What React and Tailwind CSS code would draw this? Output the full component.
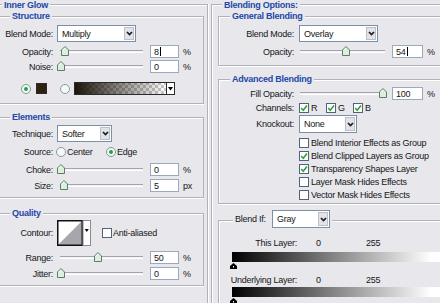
const LINE = "border-[#b1b1ba]";

function Legend({ children, className = "" }) {
  return (
    <div
      className={`h-[10px] w-fit bg-[#e7e7ec] px-[2px] font-bold leading-[10px] text-[#2447a6] ${className}`}
    >
      {children}
    </div>
  );
}

function Chevron() {
  return (
    <svg width="7" height="5" viewBox="0 0 7 5">
      <path d="M1 1 L3.5 3.6 L6 1" fill="none" stroke="#1d1d1d" strokeWidth="1.7" />
    </svg>
  );
}

function Select({ value, className = "" }) {
  return (
    <div className={`flex border border-[#7d8fa6] bg-white ${className}`}>
      <span className="flex flex-1 items-center pl-[4px]">{value}</span>
      <span className="m-px flex w-[10px] items-center justify-center border border-[#b9c0cc] bg-[#e2e3e9]">
        <Chevron />
      </span>
    </div>
  );
}

function Input({ value, caret, className = "" }) {
  return (
    <div className={`flex h-[13px] items-center border border-[#9aa9bd] bg-white pl-[3px] ${className}`}>
      {value}
      {caret && <span className="ml-px h-[9px] w-px bg-black" />}
    </div>
  );
}

function Thumb({ left }) {
  return (
    <svg
      width="8"
      height="10"
      viewBox="0 0 8 10"
      className="absolute top-[1px]"
      style={{ left }}
    >
      <path d="M4 0.5 L7.5 4 L7.5 9.5 L0.5 9.5 L0.5 4 Z" fill="#dcefdc" stroke="#5b7f66" />
      <path d="M1.5 4.5 L4 2" stroke="#fff" />
    </svg>
  );
}

function Slider({ pos, className = "" }) {
  return (
    <div className={`relative h-[13px] ${className}`}>
      <div className="absolute left-0 right-0 top-[5px] h-[3px] border-t border-b border-t-[#a4a4ad] border-b-white bg-[#f2f2f4]" />
      <Thumb left={pos} />
    </div>
  );
}

function SliderRow({ label, pos, value, unit, caret, className = "", right }) {
  return (
    <div className={`flex h-[13px] items-center ${className}`}>
      <span className={right ? "w-[75px] text-right" : "w-[53px] text-right"}>{label}</span>
      <Slider pos={pos} className={right ? "ml-[6px] w-[85px]" : "ml-[7px] w-[83px]"} />
      <Input value={value} caret={caret} className={right ? "ml-[7px] w-[31px]" : "ml-[7px] w-[29px]"} />
      <span className="ml-[4px]">{unit}</span>
    </div>
  );
}

function Radio({ on }) {
  return (
    <svg width="10" height="10" viewBox="0 0 10 10" className="shrink-0">
      <circle cx="5" cy="5" r="4.5" fill="#f7f9f7" stroke={on ? "#6f9f8a" : "#8797ab"} />
      {on && <circle cx="5" cy="5" r="2" fill="#2f9a52" />}
    </svg>
  );
}

function Box({ on }) {
  return (
    <svg width="10" height="10" viewBox="0 0 10 10" className="shrink-0">
      <rect x="0.5" y="0.5" width="9" height="9" fill="#fff" stroke="#52627a" />
      {on && <path d="M2.2 5 L4.2 7.2 L8 2.6" fill="none" stroke="#2ea13a" strokeWidth="1.6" />}
    </svg>
  );
}

function Check({ on, label }) {
  return (
    <div className="ml-[80px] flex h-[13px] items-center">
      <Box on={on} />
      <span className="ml-[2px]">{label}</span>
    </div>
  );
}

function GradientSwatch() {
  return (
    <svg width="101" height="13" viewBox="0 0 101 13" className="ml-[4px]">
      <defs>
        <pattern id="chk" width="6" height="6" patternUnits="userSpaceOnUse">
          <rect width="6" height="6" fill="#fff" />
          <rect width="3" height="3" fill="#c9c9c9" />
          <rect x="3" y="3" width="3" height="3" fill="#c9c9c9" />
        </pattern>
        <linearGradient id="fade" x1="0" x2="1" y1="0" y2="0">
          <stop offset="0" stopColor="#1c140a" stopOpacity="1" />
          <stop offset="1" stopColor="#1c140a" stopOpacity="0" />
        </linearGradient>
      </defs>
      <rect x="1" y="1" width="91" height="11" fill="url(#chk)" />
      <rect x="1" y="1" width="91" height="11" fill="url(#fade)" />
      <rect x="92" y="1" width="8" height="11" fill="#fff" />
      <rect x="0.5" y="0.5" width="100" height="12" fill="none" stroke="#2a2a2a" />
      <line x1="92.5" y1="1" x2="92.5" y2="12" stroke="#2a2a2a" />
      <path d="M94 5 H99 L96.5 8.5 Z" fill="#000" />
    </svg>
  );
}

function ContourPreview() {
  return (
    <svg width="34" height="26" viewBox="0 0 34 26" className="ml-[4px]">
      <path d="M1 1 H25 L1 25 Z" fill="#fff" />
      <path d="M25 1 V25 H1 Z" fill="#a7a7ab" />
      <rect x="0.75" y="0.75" width="24.5" height="24.5" fill="none" stroke="#111" strokeWidth="1.5" />
      <rect x="26" y="0.5" width="7.5" height="25" fill="#fff" stroke="#8a8a93" />
      <path d="M27.8 9 H31.8 L29.8 12 Z" fill="#000" />
    </svg>
  );
}

function BlendBar() {
  return (
    <div className="ml-[13px] h-[10px] bg-[linear-gradient(to_right,#000_0%,#7a7a7a_45%,#fff_96%)]" />
  );
}

function BarThumb() {
  return (
    <svg width="7" height="6" viewBox="0 0 7 6" className="ml-[11px] mt-[1px]">
      <path d="M3.5 0 L7 3 V6 H0 V3 Z" fill="#000" />
      <rect x="3" y="3" width="1" height="1.5" fill="#fff" />
    </svg>
  );
}

export default function App() {
  return (
    <div className="flex h-[303px] w-[440px] overflow-hidden bg-[#e7e7ec] font-['Liberation_Sans',Arial,sans-serif] text-[9px] leading-[10px] tracking-[-0.25px] text-[#161616]">
      {/* Inner Glow */}
      <div className="flex w-[208px] shrink-0 flex-col pt-[4px]">
        <div className={`flex-1 border-t border-r ${LINE} shadow-[inset_0_1px_0_#fff,1px_0_0_#fff]`}>
          <Legend className="-mt-[5px] ml-[2px]">Inner Glow</Legend>

          <div className={`mr-[3px] mt-[6px] border-t border-r border-b ${LINE} pb-[8px] shadow-[inset_0_1px_0_#fff,0_1px_0_#fff]`}>
            <Legend className="-mt-[6px] ml-[10px]">Structure</Legend>
            <div className="mt-[4px] flex h-[17px] items-center">
              <span className="w-[53px] text-right">Blend Mode:</span>
              <Select value="Multiply" className="ml-[4px] h-[17px] w-[79px]" />
            </div>
            <SliderRow className="mt-[3px]" label="Opacity:" pos={1} value="8" caret unit="%" />
            <SliderRow className="mt-[2px]" label="Noise:" pos={-3} value="0" unit="%" />
            <div className="mt-[9px] flex h-[13px] items-center">
              <span className="ml-[21px]">
                <Radio on />
              </span>
              <span className="ml-[5px] h-[11px] w-[11px] border border-[#2a2a2a] bg-[#30220f]" />
              <span className="ml-[13px]">
                <Radio />
              </span>
              <GradientSwatch />
            </div>
          </div>

          <div className={`mr-[3px] mt-[13px] border-t border-r border-b ${LINE} pb-[5px] shadow-[inset_0_1px_0_#fff,0_1px_0_#fff]`}>
            <Legend className="-mt-[6px] ml-[10px]">Elements</Legend>
            <div className="mt-[3px] flex h-[17px] items-center">
              <span className="w-[53px] text-right">Technique:</span>
              <Select value="Softer" className="ml-[4px] h-[17px] w-[55px]" />
            </div>
            <div className="mt-[4px] flex h-[12px] items-center">
              <span className="w-[53px] text-right">Source:</span>
              <span className="ml-[3px] flex w-[50px] items-center">
                <Radio />
                <span className="ml-[1px]">Center</span>
              </span>
              <span className="flex items-center">
                <Radio on />
                <span className="ml-[1px]">Edge</span>
              </span>
            </div>
            <SliderRow className="mt-[5px]" label="Choke:" pos={-3} value="0" unit="%" />
            <SliderRow className="mt-[3px]" label="Size:" pos={0} value="5" unit="px" />
          </div>

          <div className={`mr-[3px] mt-[15px] border-t border-r border-b ${LINE} pb-[5px] shadow-[inset_0_1px_0_#fff,0_1px_0_#fff]`}>
            <Legend className="-mt-[6px] ml-[10px]">Quality</Legend>
            <div className="mt-[2px] flex h-[26px] items-center">
              <span className="w-[53px] text-right">Contour:</span>
              <ContourPreview />
              <span className="ml-[11px] flex items-center">
                <Box />
                <span className="ml-[1px]">Anti-aliased</span>
              </span>
            </div>
            <SliderRow className="mt-[5px]" label="Range:" pos={34} value="50" unit="%" />
            <SliderRow className="mt-[3px]" label="Jitter:" pos={-3} value="0" unit="%" />
          </div>
        </div>
      </div>

      {/* Blending Options */}
      <div className="flex w-[232px] shrink-0 flex-col pt-[4px]">
        <div className={`ml-[3px] flex-1 border-t border-l ${LINE} shadow-[inset_1px_1px_0_#fff]`}>
          <Legend className="-mt-[5px] ml-[10px]">Blending Options:</Legend>

          <div className={`ml-[6px] mt-[6px] border-t border-l border-b ${LINE} pb-[7px] shadow-[inset_1px_1px_0_#fff,0_1px_0_#fff]`}>
            <Legend className="-mt-[6px] ml-[11px]">General Blending</Legend>
            <div className="mt-[4px] flex h-[17px] items-center">
              <span className="w-[75px] text-right">Blend Mode:</span>
              <Select value="Overlay" className="ml-[5px] h-[17px] w-[79px]" />
            </div>
            <SliderRow right className="mt-[3px]" label="Opacity:" pos={42} value="54" caret unit="%" />
          </div>

          <div className={`ml-[6px] mt-[13px] border-t border-l border-b ${LINE} pb-[2px] shadow-[inset_1px_1px_0_#fff,0_1px_0_#fff]`}>
            <Legend className="-mt-[6px] ml-[11px]">Advanced Blending</Legend>
            <SliderRow right className="mt-[3px]" label="Fill Opacity:" pos={79} value="100" unit="%" />
            <div className="mt-[3px] flex h-[10px] items-center">
              <span className="w-[75px] text-right">Channels:</span>
              <span className="ml-[5px] flex">
                {["R", "G", "B"].map((c) => (
                  <span key={c} className="flex w-[27px] items-center">
                    <Box on />
                    <span className="ml-[2px]">{c}</span>
                  </span>
                ))}
              </span>
            </div>
            <div className="mt-[2px] flex h-[18px] items-center">
              <span className="w-[75px] text-right">Knockout:</span>
              <Select value="None" className="ml-[5px] h-[18px] w-[58px]" />
            </div>
            <div className="mt-[3px]">
              <Check label="Blend Interior Effects as Group" />
              <Check on label="Blend Clipped Layers as Group" />
              <Check on label="Transparency Shapes Layer" />
              <Check label="Layer Mask Hides Effects" />
              <Check label="Vector Mask Hides Effects" />
            </div>
          </div>

          <div className={`ml-[6px] mt-[16px] border-t border-l ${LINE} shadow-[inset_1px_1px_0_#fff]`}>
            <div className="-mt-[11px] ml-[14px] flex h-[18px] w-fit items-center bg-[#e7e7ec] px-[2px]">
              <span className="w-[33px]">Blend If:</span>
              <Select value="Gray" className="ml-[4px] h-[18px] w-[58px]" />
            </div>
            <div className="mt-[10px] flex h-[10px] items-center">
              <span className="w-[78px] text-right">This Layer:</span>
              <span className="ml-[19px] w-[50px]">0</span>
              <span>255</span>
            </div>
            <div className="mt-[4px]">
              <BlendBar />
            </div>
            <BarThumb />
            <div className="mt-[6px] flex h-[10px] items-center">
              <span className="w-[78px] text-right">Underlying Layer:</span>
              <span className="ml-[19px] w-[50px]">0</span>
              <span>255</span>
            </div>
            <div className="mt-[2px]">
              <BlendBar />
            </div>
            <BarThumb />
          </div>
        </div>
      </div>
    </div>
  );
}
